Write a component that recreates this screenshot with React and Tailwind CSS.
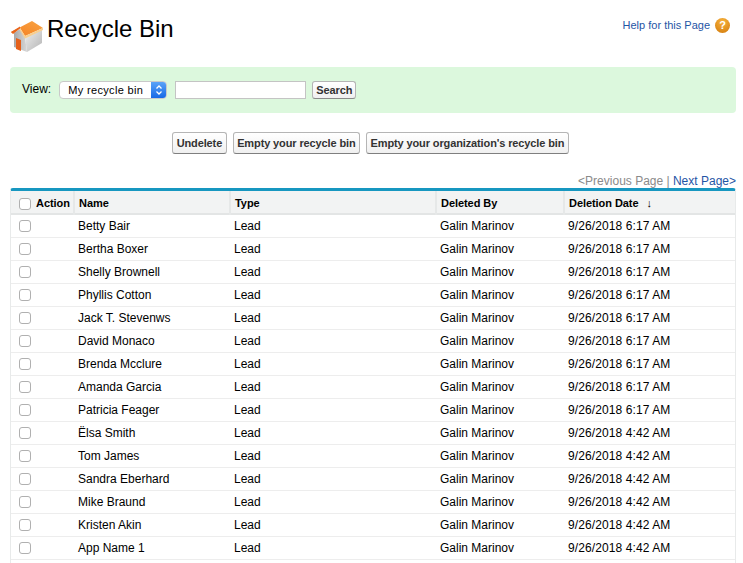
const rows = [
  ["Betty Bair", "9/26/2018 6:17 AM"],
  ["Bertha Boxer", "9/26/2018 6:17 AM"],
  ["Shelly Brownell", "9/26/2018 6:17 AM"],
  ["Phyllis Cotton", "9/26/2018 6:17 AM"],
  ["Jack T. Stevenws", "9/26/2018 6:17 AM"],
  ["David Monaco", "9/26/2018 6:17 AM"],
  ["Brenda Mcclure", "9/26/2018 6:17 AM"],
  ["Amanda Garcia", "9/26/2018 6:17 AM"],
  ["Patricia Feager", "9/26/2018 6:17 AM"],
  ["Ëlsa Smith", "9/26/2018 4:42 AM"],
  ["Tom James", "9/26/2018 4:42 AM"],
  ["Sandra Eberhard", "9/26/2018 4:42 AM"],
  ["Mike Braund", "9/26/2018 4:42 AM"],
  ["Kristen Akin", "9/26/2018 4:42 AM"],
  ["App Name 1", "9/26/2018 4:42 AM"],
];

const HouseIcon = () => (
  <svg width="34" height="36" viewBox="0 0 34 36" className="shrink-0">
    <defs>
      <linearGradient id="wallL" x1="0" y1="0" x2="1" y2="0">
        <stop offset="0" stopColor="#a8a8a8" />
        <stop offset="1" stopColor="#d8d8d8" />
      </linearGradient>
      <linearGradient id="wallR" x1="0" y1="0" x2="1" y2="1">
        <stop offset="0" stopColor="#f0f0f0" />
        <stop offset="1" stopColor="#b4b4b4" />
      </linearGradient>
      <linearGradient id="roof" x1="0" y1="1" x2="1" y2="0">
        <stop offset="0" stopColor="#f47f22" />
        <stop offset="1" stopColor="#f9a443" />
      </linearGradient>
    </defs>
    <path d="M4 15 L10 11 L15 19 L17 34 L4 29 Z" fill="url(#wallL)" />
    <path d="M15 19 L32 11 L32 25 L17 34 Z" fill="url(#wallR)" />
    <path d="M6 20 L11 22 L11 33 L6 31 Z" fill="#e5601a" />
    <path d="M1 14 L22 3 L33 10 L15 18 L10 10 L3 15.500 Z" fill="url(#roof)" />
    <path d="M10 10 L15 18 L33 10 L33 12 L15 20.500 L10 12.500 Z" fill="#f8cf8f" />
    <path d="M1 14 L10 8.500 L10 10.500 L3 16 Z" fill="#e8641a" />
  </svg>
);

const HelpIcon = () => (
  <span className="flex h-[15px] w-[15px] items-center justify-center rounded-full bg-[radial-gradient(circle_at_50%_25%,#f7b23b,#d27a0c)] text-[11px] font-bold leading-none text-white">
    ?
  </span>
);

const Btn = ({ className, children }) => (
  <button className={`h-[22px] rounded-[3px] border border-[#b5b5b5] border-b-[#7f7f7f] bg-[linear-gradient(#ffffff,#f0f0f0)] text-[11px] font-bold leading-none tracking-[-0.12px] text-[#333] ${className}`}>
    {children}
  </button>
);

const Check = () => (
  <span className="block h-[12px] w-[12px] rounded-[3px] border border-[#b0b0b0] bg-white" />
);

const Th = ({ className, children }) => (
  <th className={`border-r-2 border-[#e6e8e8] p-0 pl-[4px] pt-[3px] text-left text-[11px] font-bold tracking-[-0.06px] text-black ${className || ""}`}>
    {children}
  </th>
);

export default function App() {
  return (
    <div className="h-[563px] w-[743px] overflow-hidden bg-white font-['Liberation_Sans',Arial,sans-serif] text-[12px] text-black">
      <div className="flex h-[67px] items-start justify-between pl-[10px] pr-[13px]">
        <div className="flex items-start pt-[18px]">
          <HouseIcon />
          <h1 className="ml-[3px] mt-[-3px] text-[24px] leading-[28px] font-normal">Recycle Bin</h1>
        </div>
        <div className="flex items-center gap-[5px] pt-[17px]">
          <a className="text-[11px] text-[#1f55a5]">Help for this Page</a>
          <HelpIcon />
        </div>
      </div>

      <div className="ml-[10px] mr-[7px] flex h-[46px] items-center rounded-[4px] bg-[#dcf8dd] pl-[12px]">
        <span className="mb-[3px] mr-[8px]">View:</span>
        <div className="flex h-[18px] w-[108px] overflow-hidden rounded-[4px] border border-[#c9c9c9] bg-white">
          <span className="flex-1 pl-[8px] text-[11px] leading-[16px] tracking-[0.35px]">My recycle bin</span>
          <span className="flex w-[15px] items-center justify-center bg-[linear-gradient(#5aa3f8,#1769e6)]">
            <svg width="8" height="12" viewBox="0 0 8 12" fill="none" stroke="white" strokeWidth="1.300">
              <path d="M1.500 4.500 L4 2 L6.500 4.500" />
              <path d="M1.500 7.500 L4 10 L6.500 7.500" />
            </svg>
          </span>
        </div>
        <input className="ml-[8px] h-[18px] w-[131px] border border-[#c4c4c4] bg-white" />
        <div className="ml-[6px]">
          <button className="h-[18px] rounded-[3px] border border-[#b5b5b5] border-b-[#8a8a8a] bg-[linear-gradient(#ffffff,#f0f0f0)] px-[3px] text-[11px] font-bold leading-none tracking-[-0.08px] text-[#333]">
            Search
          </button>
        </div>
      </div>

      <div className="mt-[19px] flex justify-center gap-[6px] pr-[2px]">
        <Btn className="px-[4px]">Undelete</Btn>
        <Btn className="px-[3px]">Empty your recycle bin</Btn>
        <Btn className="px-[4px]">Empty your organization's recycle bin</Btn>
      </div>

      <div className="mt-[20px] h-[14px] pr-[7px] text-right leading-[15px] text-[#8a8a8a]">
        &lt;Previous Page | <a className="text-[#1f55a5]">Next Page&gt;</a>
      </div>

      <div className="ml-[10px] w-[726px] overflow-hidden rounded-t-[3px] border-x border-t-[3px] border-x-[#e8eaea] border-t-[#1797c0]">
        <table className="w-[724px] table-fixed border-collapse">
          <colgroup>
            <col className="w-[63px]" />
            <col className="w-[156px]" />
            <col className="w-[206px]" />
            <col className="w-[128px]" />
            <col />
          </colgroup>
          <thead>
            <tr className="h-[23px] border-b-2 border-[#e3e5e5] bg-[#f2f3f3]">
              <Th className="pl-[8px]">
                <div className="flex items-center gap-[5px]">
                  <Check />
                  <span>Action</span>
                </div>
              </Th>
              <Th>Name</Th>
              <Th>Type</Th>
              <Th>Deleted By</Th>
              <th className="p-0 pl-[4px] pt-[3px] text-left text-[11px] font-bold tracking-[-0.06px]">
                Deletion Date <span className="ml-[5px] text-[11px] font-normal">↓</span>
              </th>
            </tr>
          </thead>
          <tbody>
            {rows.map(([name, date]) => (
              <tr key={name} className="h-[23px] border-b border-[#ededed]">
                <td className="p-0 pl-[8px]"><Check /></td>
                <td className="p-0 pl-[4px]">{name}</td>
                <td className="p-0 pl-[4px]">Lead</td>
                <td className="p-0 pl-[4px]">Galin Marinov</td>
                <td className="p-0 pl-[4px] tracking-[0.1px]">{date}</td>
              </tr>
            ))}
            <tr className="h-[23px]"><td colSpan={5} /></tr>
          </tbody>
        </table>
      </div>
    </div>
  );
}
